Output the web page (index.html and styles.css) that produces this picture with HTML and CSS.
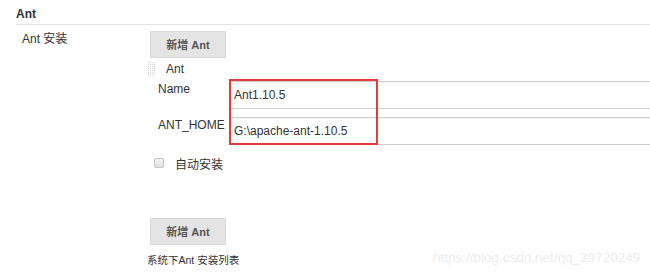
FILE: index.html
```html
<!DOCTYPE html>
<html>

<head>
  <title>Ant</title>
  <meta charset="utf-8">
  <link rel="stylesheet" href="styles.css">
</head>

<body>
  <div class="section">
    <div class="section-title">Ant</div>

    <div class="row">
      <div class="row-label">Ant 安装</div>
      <div class="row-body">
        <button class="btn">新增 Ant</button>

        <div class="repeat">
          <div class="repeat-head"><span class="grip"></span>Ant</div>
          <div class="field field-first">
            <label>Name</label>
            <input type="text" value="Ant1.10.5">
          </div>
          <div class="field">
            <label>ANT_HOME</label>
            <input type="text" value="G:\apache-ant-1.10.5">
          </div>
          <label class="check"><input type="checkbox">自动安装</label>
          <!-- annotation box -->
          <div class="mark"></div>
        </div>

        <button class="btn btn-bottom">新增 Ant</button>
        <div class="hint">系统下Ant 安装列表</div>
      </div>
    </div>
  </div>

  <div class="watermark">https://blog.csdn.net/qq_39720249</div>
</body>
</html>
```

FILE: styles.css
```css
/* variables */
:root {
  --font: "Liberation Sans", "Noto Sans CJK SC", sans-serif;
  --text-color: #333;
  --line-color: #e3e3e3;
  --btn-bg: #e4e4e4;
}

/* global */
* {
  box-sizing: border-box;
}

html,
body {
  margin: 0;
  padding: 0;
  overflow: hidden;
  background: #fff;
  color: var(--text-color);
  font: 12px/16px var(--font);
}

/* section */
.section-title {
  margin-left: 16px;
  padding: 6px 0 2px;
  font-weight: bold;
  border-bottom: 1px solid var(--line-color);
}

.row {
  display: flex;
  padding-top: 6px;
}

.row-label {
  width: 128px;
  margin-left: 22px;
  flex-shrink: 0;
}

.row-body {
  flex: 1;
}

/* buttons */
.btn {
  display: block;
  width: 76px;
  height: 27px;
  padding: 0;
  border: 1px solid #d9d9d9;
  background: var(--btn-bg);
  color: #555;
  font: bold 11px/16px var(--font);
}

.btn-bottom {
  margin-top: 45px;
}

.hint {
  margin: 7px 0 0 -3px;
  font-size: 10.5px;
}

/* repeatable block */
.repeat {
  position: relative;
  margin-top: 3px;
}

.repeat-head {
  display: flex;
  align-items: center;
  height: 16px;
}

.grip {
  width: 7px;
  height: 14px;
  margin: 0 11px 0 -2px;
  background-image:
    linear-gradient(90deg, transparent 1px, #fff 1px),
    linear-gradient(transparent 1px, #fff 1px);
  background-size: 2px 2px;
  background-color: #d6d6d6;
}

.field {
  display: flex;
  margin: 8px -20px 0 8px;
}

.field-first {
  margin-top: 4px;
}

.field label {
  width: 72px;
  flex-shrink: 0;
}

.field input {
  flex: 1;
  height: 28px;
  padding: 0 3px;
  border: 1px solid #d0d0d0;
  box-shadow: inset 0 1px 1px rgba(0, 0, 0, 0.05);
  color: var(--text-color);
  font: 12px var(--font);
  outline: none;
}

.check {
  display: flex;
  margin-top: 12px;
}

.check input {
  appearance: none;
  width: 10px;
  height: 10px;
  margin: 1px 11px 0 4px;
  border: 1px solid #c4c4c4;
  border-radius: 2px;
  background: linear-gradient(#f4f4f4, #e0e0e0);
}

/* red annotation */
.mark {
  position: absolute;
  top: 18px;
  left: 79px;
  width: 149px;
  height: 66px;
  border: 2px solid #e53a3a;
}

.watermark {
  position: absolute;
  left: 433px;
  top: 250px;
  font: 13.5px/16px var(--font);
  color: #ececec;
}
```
